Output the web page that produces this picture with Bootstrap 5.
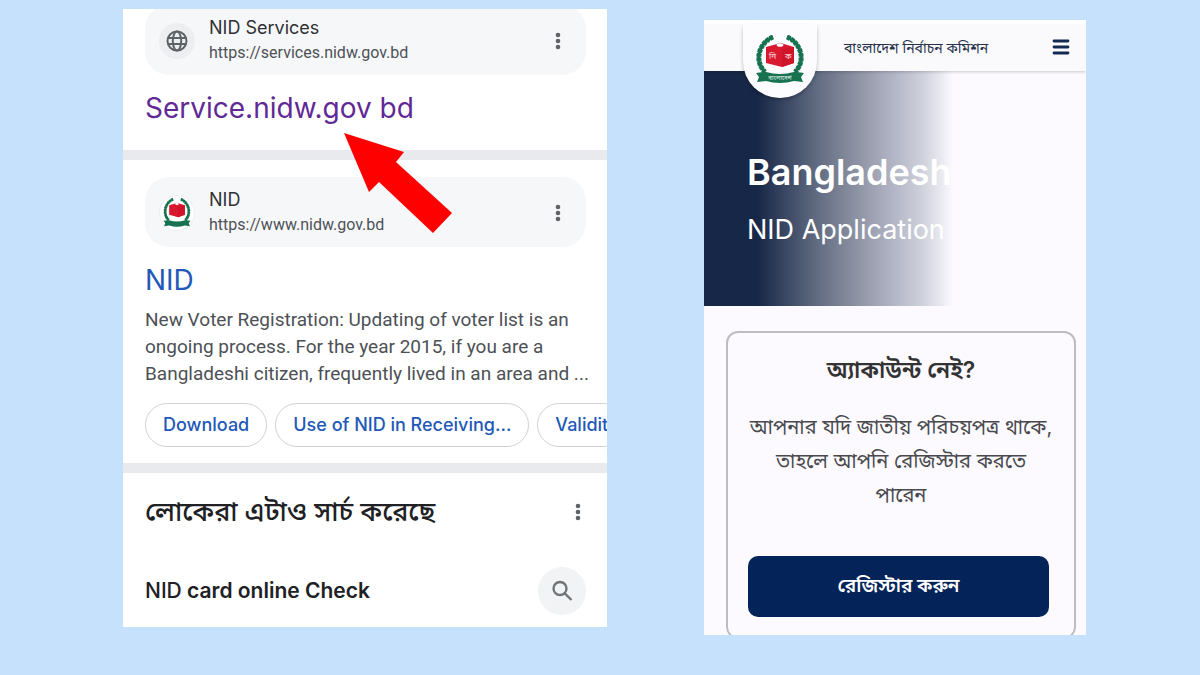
<!DOCTYPE html>
<html lang="bn">
<head>
<meta charset="utf-8">
<meta name="viewport" content="width=device-width, initial-scale=1">
<title>NID Services</title>
<link href="https://cdn.jsdelivr.net/npm/bootstrap@5.3.0/dist/css/bootstrap.min.css" rel="stylesheet">
<style>
body{background:#c6e1fb;color:#202124;font-family:Inter,"Noto Sans Bengali","Noto Sans",sans-serif}
.stage{display:grid;grid-template-columns:123fr 484fr 97fr 382fr 114fr;align-items:start}
.results{grid-column:2;margin-top:9px}
.band{height:10px;background:#e8eaed}
.results section{padding:0 21px 0 22px}
.results .nid-result{padding-top:17px}
.site{background:#f6f7f9;border-radius:24px;height:70px;padding:2px 17px 0 14px}
.site-first{margin-top:-4px}
.site-icon{width:36px;height:36px;background:#eceef0}
.site-icon.pale{background:#fff;border:1px solid #eceef0}
.site-text{padding-left:14px}
.site-name{font-size:18px;line-height:24px;color:#303134}
.site-url{font-family:Roboto,sans-serif;font-size:16px;line-height:26px;color:#4d5156}
.dots{border:0;background:none;padding:0;width:22px;height:22px;color:#5f6368}
.headline{font-size:28px;line-height:35px;text-decoration:none}
.visited{color:#5f2a96}
.fresh{color:#2258b8}
.snippet{font-family:Roboto,sans-serif;font-size:19px;line-height:27px;color:#4d5156;margin-right:-12px}
.chips{margin-right:-21px;overflow:hidden}
.chip{flex:none;height:44px;border:1px solid #d0d2d6;border-radius:22px;background:#fff;color:#2258b8;font-size:18px;font-weight:500;padding:0 17px;line-height:36px}
.asked-row{padding:20px 0 22px;margin-right:-3px}
.asked{font-size:27px;line-height:38px;font-weight:500}
.query-row{padding:14px 0 12px}
.query{font-size:21px;line-height:28px;color:#202124;text-decoration:none;font-weight:600}
.query span{font-weight:500}
.find{width:48px;height:48px;border:0;background:#f1f3f4;color:#70757a}
.pointer{left:221px;top:124px;pointer-events:none}
.portal{grid-column:4;margin-top:20px;background:#fcfaff;height:615px}
.topbar{border-top:4px solid #fff;background:#fafafd;height:51px;box-shadow:0 1px 3px #0003;z-index:2}
.crest{left:39px;top:0;width:74px;height:74px;background:#fcfcff;border-radius:0 0 37px 37px;box-shadow:0 2px 4px -1px #0006}
.org{font-size:14px;line-height:20px;color:#26304a;margin-left:140px}
.menu{border:0;background:none;padding:0;color:#14294f}
.hero{height:235px;padding:79px 0 0 43px;color:#fff;background:linear-gradient(90deg,#172747 0,#172747 14%,#5a657c 28%,#858b9c 38%,#a9acbd 47%,#ced0db 57%,#e9e9f1 62%,#fcfaff 65%)}
.hero h1{font-size:36px;line-height:44px;font-weight:600;margin:0}
.hero p{font-size:27px;line-height:36px;margin:18px 0 0}
.signup{margin:25px 10px 0 22px;border:2px solid #bdbcc1;border-radius:12px;height:308px;padding:20px 10px 0 10px}
.signup h2{font-size:23px;line-height:34px;font-weight:600;margin:0;color:#333}
.signup p{font-size:20px;line-height:34px;color:#4a4a4e;margin:23px 0 0}
.register{display:block;width:301px;max-width:100%;height:61px;border:0;border-radius:10px;background:#032359;color:#fff;font-size:19px;font-weight:600;margin:44px 0 0 10px}
.ribbon-text{font-size:6px;fill:#e4f2ea}
.cube-text{font-size:8px;font-weight:500;fill:#f7c7cb}
</style>
<script src="https://cdn.jsdelivr.net/npm/bootstrap@5.3.0/dist/js/bootstrap.bundle.min.js"></script>
</head>
<body>
<svg class="d-none">
<symbol id="dots" viewBox="0 0 22 22"><g fill="currentColor"><circle cx="11" cy="5" r="2.3"/><circle cx="11" cy="11" r="2.3"/><circle cx="11" cy="17" r="2.3"/></g></symbol>
<symbol id="emblem" viewBox="0 0 50 50">
<g fill="none" stroke="#16724f" stroke-width="5" stroke-dasharray="3.6 .8"><path d="M18 2C5 7-2 25 10 37"/><path d="M32 2C45 7 52 25 40 37"/></g>
<path fill="none" stroke="#16724f" stroke-width="3" d="M18 2C5 7-2 25 10 37M32 2C45 7 52 25 40 37"/>
<path fill="#d8192f" d="M11 12L22 9Q25 7 29 9L39 12V28L27 32L11 28Z"/><path fill="#d0152b" d="M27 14L39 12V28L27 32Z"/>
<ellipse cx="25" cy="10" rx="3.4" ry="1.8" fill="#fff"/>
<path fill="#16724f" d="M1 38L8 37L11 37Q25 41 39 37L42 37L49 38L46 42L48 47L39 46Q25 50 11 46L2 47L4 42Z"/>
</symbol>
</svg>
<main class="stage">
<div class="results bg-white position-relative">
<div class="overflow-hidden">
<section class="pb-4">
<div class="site site-first d-flex align-items-center">
<div class="site-icon rounded-circle d-flex align-items-center justify-content-center"><svg width="22" height="22" viewBox="0 0 22 22" fill="none" stroke="#5f6368" stroke-width="2"><circle cx="11" cy="11" r="9.5"/><ellipse cx="11" cy="11" rx="4.2" ry="9.5"/><path d="M2 8h18M2 14h18"/></svg></div>
<div class="site-text flex-grow-1"><div class="site-name">NID Services</div><div class="site-url">https://services.nidw.gov.bd</div></div>
<button class="dots d-flex" aria-label="More about this result"><svg width="22" height="22"><use href="#dots"/></svg></button>
</div>
<div class="pt-3"><a class="headline visited d-block" href="#">Service.nidw.gov bd</a></div>
</section>
</div>
<div class="band"></div>
<section class="nid-result">
<div class="site d-flex align-items-center">
<div class="site-icon pale rounded-circle d-flex align-items-center justify-content-center"><svg width="28" height="30" viewBox="0 0 50 50" preserveAspectRatio="none"><use href="#emblem"/></svg></div>
<div class="site-text flex-grow-1"><div class="site-name">NID</div><div class="site-url">https://www.nidw.gov.bd</div></div>
<button class="dots d-flex" aria-label="More about this result"><svg width="22" height="22"><use href="#dots"/></svg></button>
</div>
<div class="pt-3"><a class="headline fresh d-block" href="#">NID</a></div>
<p class="snippet mb-3 pt-2">New Voter Registration: Updating of voter list is an ongoing process. For the year 2015, if you are a Bangladeshi citizen, frequently lived in an area and ...</p>
<div class="chips d-flex gap-2 pb-3"><button class="chip">Download</button><button class="chip">Use of NID in Receiving...</button><button class="chip">Validit</button></div>
</section>
<div class="band"></div>
<section>
<div class="asked-row d-flex align-items-center justify-content-between"><div class="asked">লোকেরা এটাও সার্চ করেছে</div><button class="dots d-flex" aria-label="More options"><svg width="22" height="22"><use href="#dots"/></svg></button></div>
<div class="query-row d-flex align-items-center justify-content-between"><a class="query" href="#"><span>NID</span> card online Check</a><button class="find rounded-circle d-flex align-items-center justify-content-center p-0" aria-label="Search"><svg width="24" height="24" viewBox="0 0 24 24" fill="none" stroke="currentColor" stroke-width="2.4"><circle cx="10" cy="9.5" r="6.5"/><path d="M14.8 14.3L21.5 21"/></svg></button></div>
</section>
<svg class="pointer position-absolute" width="110" height="101" viewBox="0 0 110 101" aria-hidden="true"><path fill="#fe0000" d="M0 0L60 19L52 29L108 80L89 100L35 49L25 59Z"/></svg>
</div>
<div class="portal overflow-hidden">
<header class="topbar position-relative d-flex align-items-center justify-content-between pe-3">
<a class="crest position-absolute d-flex justify-content-center pt-2" href="#" aria-label="Home"><svg width="50" height="56" viewBox="0 0 50 50"><use href="#emblem"/><text class="cube-text" x="14" y="24">নি</text><text class="cube-text" x="30" y="24">ক</text><text class="ribbon-text" x="25" y="45" text-anchor="middle">বাংলাদেশ</text></svg></a>
<span class="org">বাংলাদেশ নির্বাচন কমিশন</span>
<button class="menu d-flex" aria-label="Menu"><svg width="18" height="20" viewBox="0 1 18 20" stroke="currentColor" stroke-width="2.8" stroke-linecap="round"><path d="M2 4h14M2 10h14M2 16h14"/></svg></button>
</header>
<div class="hero"><h1>Bangladesh</h1><p>NID Application</p></div>
<section class="signup"><div class="text-center"><h2>অ্যাকাউন্ট নেই?</h2><p>আপনার যদি জাতীয় পরিচয়পত্র থাকে,<br>তাহলে আপনি রেজিস্টার করতে<br>পারেন</p></div><button class="register">রেজিস্টার করুন</button></section>
</div>
</main>
</body>
</html>
